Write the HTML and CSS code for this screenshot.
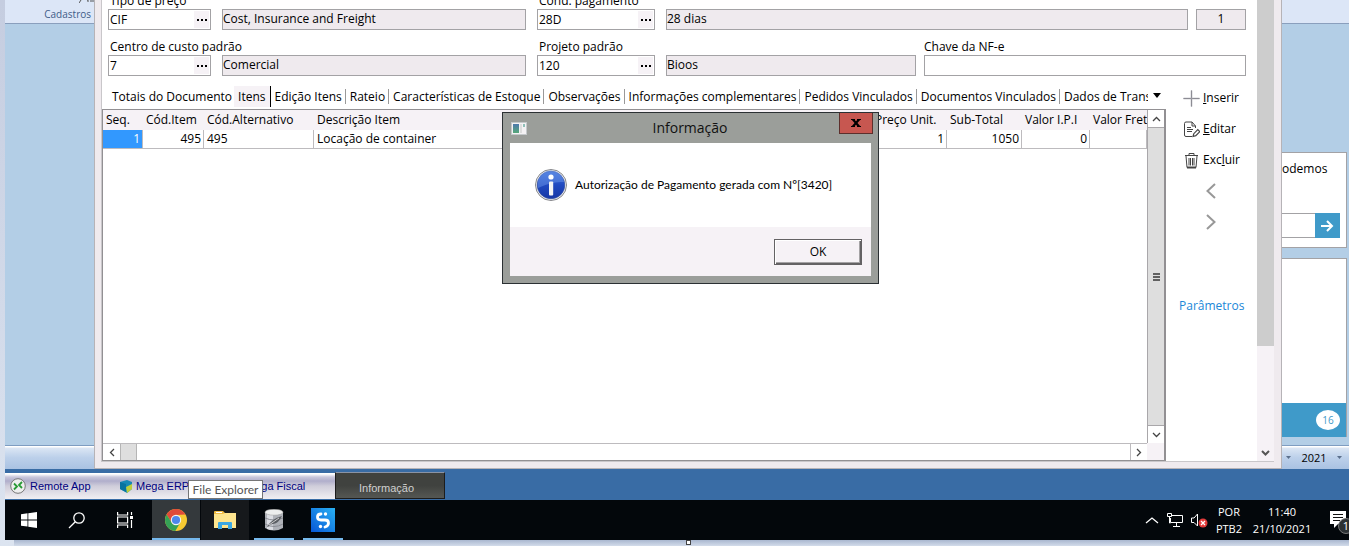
FILE: index.html
```html
<!DOCTYPE html>
<html lang="pt-BR">
<head>
<meta charset="utf-8">
<title>Mega ERP</title>
<link rel="stylesheet" href="styles.css">
</head>
<body>
<div class="screen">
  <main class="workspace">
    <aside class="side-left">
      <div class="ribbon"><svg class="ribbon-mark" width="15" height="3" viewBox="0 0 15 3"><path d="M2 0L0 3M8 0h1v2M12 0v2M14 0v2" stroke="#555" fill="none"/></svg><span>Cadastros</span></div>
      <div class="status"></div>
    </aside>

    <section class="window">
      <div class="window-body">
        <div class="content">
          <form class="form">
            <div class="form-row">
              <label class="lab" for="tipo">Tipo de preço</label>
              <span class="lab"></span>
              <label class="lab" for="cond">Cond. pagamento</label>
              <span class="lab"></span>
              <div class="picker"><input id="tipo" value="CIF"><button type="button" aria-label="Buscar tipo"><i></i><i></i><i></i></button></div>
              <input class="ro" aria-label="Descrição do tipo" value="Cost, Insurance and Freight" readonly>
              <div class="picker"><input id="cond" value="28D"><button type="button" aria-label="Buscar condição"><i></i><i></i><i></i></button></div>
              <div class="pair"><input class="ro grow" aria-label="Descrição da condição" value="28 dias" readonly><input class="ro count" aria-label="Parcelas" value="1" readonly></div>
            </div>
            <div class="form-row">
              <label class="lab" for="centro">Centro de custo padrão</label>
              <label class="lab" for="proj">Projeto padrão</label>
              <label class="lab lab-key" for="chave">Chave da NF-e</label>
              <div class="picker"><input id="centro" value="7"><button type="button" aria-label="Buscar centro"><i></i><i></i><i></i></button></div>
              <input class="ro" aria-label="Descrição do centro" value="Comercial" readonly>
              <div class="picker"><input id="proj" value="120"><button type="button" aria-label="Buscar projeto"><i></i><i></i><i></i></button></div>
              <div class="pair key-pair"><input class="ro" aria-label="Descrição do projeto" value="Bioos" readonly><input class="plain" id="chave"></div>
            </div>
          </form>

          <div class="lower">
            <div class="grid-area">
              <nav class="tabs">
                <div class="tab-list">
                  <button>Totais do Documento</button><button class="active">Itens</button><button>Edição Itens</button><button>Rateio</button><button>Características de Estoque</button><button>Observações</button><button>Informações complementares</button><button>Pedidos Vinculados</button><button>Documentos Vinculados</button><button>Dados de Transporte</button>
                </div>
                <button class="tab-more" aria-label="Mais abas"><svg width="8" height="5" viewBox="0 0 8 5"><path d="M0 0h8L4 5z"/></svg></button>
              </nav>
              <div class="grid">
                <div class="grid-view">
                  <table>
                    <colgroup><col class="c-seq"><col class="c-item"><col class="c-alt"><col><col class="c-price"><col class="c-sub"><col class="c-ipi"><col class="c-frete"></colgroup>
                    <thead><tr><th>Seq.</th><th>Cód.Item</th><th>Cód.Alternativo</th><th>Descrição Item</th><th>Preço Unit.</th><th>Sub-Total</th><th>Valor I.P.I</th><th>Valor Frete</th></tr></thead>
                    <tbody><tr><td class="num sel">1</td><td class="num">495</td><td>495</td><td>Locação de container</td><td class="num">1</td><td class="num">1050</td><td class="num">0</td><td></td></tr></tbody>
                  </table>
                </div>
                <div class="vbar">
                  <button aria-label="Subir"><svg width="9" height="6" viewBox="0 0 9 6"><path d="M1 5l3.500-3.500L8 5"/></svg></button>
                  <div class="vthumb"><i></i><i></i><i></i></div>
                  <button aria-label="Descer"><svg width="9" height="6" viewBox="0 0 9 6"><path d="M1 1l3.500 3.500L8 1"/></svg></button>
                </div>
                <div class="hbar">
                  <button aria-label="Esquerda"><svg width="6" height="9" viewBox="0 0 6 9"><path d="M5 1L1.500 4.500 5 8"/></svg></button>
                  <div class="hthumb"></div>
                  <button class="hright" aria-label="Direita"><svg width="6" height="9" viewBox="0 0 6 9"><path d="M1 1l3.500 3.500L1 8"/></svg></button>
                </div>
                <div class="corner"></div>
              </div>
            </div>
            <div class="actions">
              <button><svg width="17" height="17" viewBox="0 0 17 17"><path d="M8 .5h1v16H8zM.5 8h16v1H.5z" fill="#77757e" stroke="#aaa8b0" stroke-width=".5"/></svg><span><u>I</u>nserir</span></button>
              <button><svg width="17" height="17" viewBox="0 0 17 17" fill="none" stroke="#444"><path d="M12.500 7V5L9 1H3Q1.500 1 1.500 2.500v11.500q0 1.500 1.500 1.500h6M9 1v4h3.500M4 6.500h4M4 8.500h6M4 10.500h5"/><path d="M10 15.500l.8-2.800 4-4 2 2-4 4z" stroke-width="1.200"/></svg><span><u>E</u>ditar</span></button>
              <button><svg width="17" height="17" viewBox="0 0 17 17" fill="none" stroke="#444"><path d="M2 3.500h13M6 3V1.500h5V3M3 4l1 11.500h9L14 4M6 6v7.500M7.500 6v7.500M9.500 6v7.500M11 6v7.500"/><path d="M4 15.500h9" stroke-width="2"/></svg><span>Exc<u>l</u>uir</span></button>
              <button class="arrow" aria-label="Anterior"><svg width="10" height="16" viewBox="0 0 10 16"><path d="M9 1L1.500 8 9 15"/></svg></button>
              <button class="arrow" aria-label="Próximo"><svg width="10" height="16" viewBox="0 0 10 16"><path d="M1 1l7.500 7L1 15"/></svg></button>
              <a class="params" href="#">Parâmetros</a>
            </div>
          </div>
        </div>
        <div class="page-scroll"><div class="page-thumb"></div><button aria-label="Rolar para baixo"><svg width="9" height="6" viewBox="0 0 9 6"><path d="M1 1l3.500 3.500L8 1"/></svg></button></div>
      </div>
    </section>

    <aside class="side-right">
      <div class="ribbon"></div>
      <div class="cards">
        <div class="card search-card"><p>odemos</p><div class="search"><input aria-label="Pesquisa"><button aria-label="Ir"><svg width="13" height="12" viewBox="0 0 13 12"><path d="M0 6h11M6 1l5 5-5 5" fill="none" stroke="#fff" stroke-width="2"/></svg></button></div></div>
        <div class="card notes"><div class="band"><span>16</span></div></div>
      </div>
      <div class="status"><svg width="5" height="3" viewBox="0 0 5 3"><path d="M0 0h5L2.500 3z"/></svg><span>2021</span><svg width="5" height="3" viewBox="0 0 5 3"><path d="M0 0h5L2.500 3z"/></svg></div>
    </aside>

    <div class="dialog" role="dialog" aria-labelledby="dlg-title">
      <header>
        <svg width="16" height="13" viewBox="0 0 16 13"><defs><linearGradient id="mini" x1="0" y1="0" x2="0" y2="1"><stop offset="0" stop-color="#4d79ad"/><stop offset="1" stop-color="#57a879"/></linearGradient></defs><rect x=".5" y=".5" width="15" height="12" fill="#f4f2f4" stroke="#c5c9cb"/><path d="M2 2h6v9H2z" fill="url(#mini)"/><path d="M9 2h2v9H9z" fill="#ddd"/><path d="M12 2h2v3h-2z" fill="#8fc0b8"/></svg>
        <h1 id="dlg-title">Informação</h1>
        <button class="close" aria-label="Fechar"><svg width="10" height="8" viewBox="0 0 10 8"><path d="M1.500 0L8.500 8M8.500 0L1.500 8" stroke="#000" stroke-width="2.200"/><path d="M0 .5h4M6 .5h4M0 7.500h4M6 7.500h4" stroke="#000"/></svg></button>
      </header>
      <div class="dialog-inner">
        <div class="message">
          <svg width="32" height="32" viewBox="0 0 32 32"><defs><linearGradient id="blue" x1="0" y1="0" x2="0" y2="1"><stop offset="0" stop-color="#4276de"/><stop offset=".5" stop-color="#2049c0"/><stop offset="1" stop-color="#1737a5"/></linearGradient></defs><circle cx="16" cy="16" r="15.500" fill="#f2f2f2" stroke="#85868a"/><circle cx="16" cy="16" r="13.800" fill="url(#blue)" stroke="#334f9f" stroke-width=".7"/><path d="M3 16a13 13 0 0 1 26-3Q17 12 3 19z" fill="#6a94e8" opacity=".5"/><circle cx="16" cy="8" r="2.600" fill="#fff"/><rect x="14" y="12.500" width="4.200" height="14" rx="1" fill="#f5f5f5"/></svg>
          <p>Autorização de Pagamento gerada com Nº[3420]</p>
        </div>
        <footer><button class="ok">OK</button></footer>
      </div>
    </div>
  </main>

  <nav class="apps">
    <div class="app-list">
      <button><svg width="16" height="16" viewBox="0 0 16 16"><circle cx="8" cy="8" r="7.300" fill="#eee" stroke="#777"/><path d="M4 5.500l3 3-3 3M12 4L9 7l3 3" fill="none" stroke="#299a35" stroke-width="1.800"/></svg>Remote App</button>
      <button><svg width="12" height="13" viewBox="0 0 12 13"><path d="M0 2l7-2 5 2v7l-5 4-7-4z" fill="#1788b5"/><path d="M0 2l6 2v8L0 9z" fill="#08739f"/><path d="M6 7l6-3v5l-5 4z" fill="#bfcf3b"/></svg>Mega ERP</button>
      <button><svg width="12" height="13" viewBox="0 0 12 13"><path d="M0 2l7-2 5 2v7l-5 4-7-4z" fill="#1788b5"/></svg>Mega Fiscal</button>
    </div>
    <button class="app-current">Informação</button>
    <div class="tooltip" role="tooltip">File Explorer</div>
  </nav>

  <footer class="taskbar">
    <button class="tb" aria-label="Iniciar"><svg width="16" height="16" viewBox="0 0 16 16" fill="#fff"><path d="M0 2.200l6.500-.9v6.200H0zM7.300 1.200L16 0v7.500H7.300zM0 8.400h6.500v6.200L0 13.700zM7.300 8.400H16V16l-8.700-1.200z"/></svg></button>
    <button class="tb" aria-label="Pesquisar"><svg width="18" height="17" viewBox="0 0 18 17" fill="none" stroke="#fff" stroke-width="1.300"><circle cx="11" cy="6" r="5.200"/><path d="M7.300 9.800L1 16"/></svg></button>
    <button class="tb" aria-label="Visão de tarefas"><svg width="17" height="16" viewBox="0 0 17 16" fill="none" stroke="#fff" stroke-width="1.200"><path d="M.6 0v3h10V0M.6 5h10v6h-10zM.6 16v-3h10v3M14.500 0v3M14.500 8v8"/><path d="M13 4h3v3h-3z" fill="#fff" stroke="none"/></svg></button>
    <div class="running">
      <button class="tb chrome" aria-label="Chrome"><svg width="22" height="22" viewBox="0 0 22 22"><circle cx="11" cy="11" r="11" fill="#f7ca32"/><path d="M1.500 5.500A11 11 0 0 1 20.500 5.500L11 6 6.500 13.500z" fill="#df4a3a"/><path d="M1.500 5.500A11 11 0 0 0 10.300 22L15.300 13.500 6.700 13.500z" fill="#35a156"/><circle cx="11" cy="11" r="5.200" fill="#f4f4f4"/><circle cx="11" cy="11" r="4.100" fill="#4d87ec"/></svg></button>
      <button class="tb explorer" aria-label="File Explorer"><svg width="22" height="19" viewBox="0 0 22 19"><path d="M0 1q0-1 1-1h8l2 2h10q1 0 1 1v14H0z" fill="#f0bd45"/><path d="M2 1h6v1H2z" fill="#fff"/><path d="M0 3h9l2-1h11v15H0z" fill="#fde58f"/><path d="M4 18v-6q0-1 1-1h12q1 0 1 1v6h-4v-4H8v4z" fill="#3aa7e4"/></svg></button>
      <button class="tb run" aria-label="Banco de dados"><svg width="20" height="22" viewBox="0 0 20 22"><path d="M1 3v16q9 5 18 0V3z" fill="#aeb1b8"/><path d="M3 4v16q3 1 6 1V4z" fill="#dadce2"/><ellipse cx="10" cy="3.200" rx="9" ry="3" fill="#eceded" stroke="#999" stroke-width=".5"/><path d="M1 9q9 4 18 0M1 15q9 5 18 0" fill="none" stroke="#8a8c94"/><path d="M3 18Q7 10 18 7q-3 7-9 8-3 0-5 3z" fill="#5b5e64"/><path d="M5 16l10-7" stroke="#ccc"/></svg></button>
      <button class="tb run" aria-label="Aplicativo"><svg width="24" height="24" viewBox="0 0 24 24"><defs><linearGradient id="sb" x1="0" y1="1" x2="1" y2="0"><stop offset="0" stop-color="#0757d6"/><stop offset="1" stop-color="#29b1f4"/></linearGradient></defs><path d="M0 0h24v24H0z" fill="url(#sb)"/><path d="M10 6q-3.500 0-3.500 3T10 12h4q3.500 0 3.500 3T14 19" fill="none" stroke="#fff" stroke-width="2.800" stroke-linecap="round"/><circle cx="14.500" cy="6" r="1.700" fill="#fff"/><circle cx="9.500" cy="18.500" r="1.700" fill="#fff"/></svg></button>
    </div>
    <div class="tray">
      <svg width="14" height="8" viewBox="0 0 14 8"><path d="M1 7l6-5 6 5" fill="none" stroke="#fff" stroke-width="1.300"/></svg>
      <svg width="16" height="14" viewBox="0 0 16 14" fill="none" stroke="#fff"><path d="M5 2.500h10.500v7H3.500V5M.5.5h4v3h-4zM2.500 4v6h1M9.500 10v3M6 13.500h7"/></svg>
      <svg width="17" height="15" viewBox="0 0 17 15"><path d="M.5 5h2.500l3.500-4v12L3 9.500H.5z" fill="none" stroke="#fff"/><circle cx="12" cy="10" r="4.500" fill="#e23b3b"/><path d="M10 8l4 4M14 8l-4 4" stroke="#fff" stroke-width="1.300"/></svg>
      <div class="tray-text">POR<br>PTB2</div>
      <div class="tray-text clock">11:40<br>21/10/2021</div>
      <div class="notif"><svg width="17" height="18" viewBox="0 0 17 18"><path d="M0 0h16v13H8l-4 4v-4H0z" fill="#fff"/><path d="M3 3.500h10M3 6.500h10M3 9.500h7" stroke="#111"/></svg><span>1</span></div>
    </div>
  </footer>
  <div class="edge"><i></i></div>
</div>
</body>
</html>
```
FILE: styles.css
```css
* { box-sizing: border-box; }
html, body { height: 100%; }
body { margin: 0; overflow: hidden; font: 12px/16px "Open Sans", "Noto Sans", sans-serif; color: #000; }
button, input { font: inherit; color: inherit; margin: 0; padding: 0; border: 0; background: none; border-radius: 0; outline: 0; }
svg { flex: none; }
button { display: flex; align-items: center; }
h1, p { margin: 0; font-weight: 400; }

.screen { display: flex; flex-direction: column; height: 100vh; padding-left: 5px; background: linear-gradient(#c5cde0, #dce4f0); }
.workspace { position: relative; flex: 1; min-height: 0; display: flex; background: #b3cee6; }

.side-left, .side-right { flex: none; display: flex; flex-direction: column; overflow: hidden; }
.side-left { width: 89px; justify-content: space-between; }
.side-right { width: 67px; }
.ribbon { position: relative; flex: none; height: 24px; background: #dce6f7; border-bottom: 1px solid #8a9fbd; font-size: 10px; line-height: 16px; color: #3e5c87; padding: 6px 3px 0 0; text-align: right; }
.ribbon-mark { position: absolute; top: 0; right: 0; }
.status { flex: none; height: 24px; display: flex; align-items: center; justify-content: space-between; padding: 0 7px 0 4px; border-top: 1px solid #7f9dc1; background: linear-gradient(#fff 1px, #dbe6f4 2px, #bcd0ea 50%, #aac2e2); font-size: 11px; fill: #5b6f8c; }

.window { flex: 1; min-width: 0; display: flex; padding: 0 7px 6px 6px; background: #efeaee; border: solid #b6b3b7; border-width: 0 1px 1px; overflow: hidden; }
.window-body { flex: 1; min-width: 0; display: flex; background: #fff; border: solid #c9c7ca; border-width: 0 0 1px 1px; }
.content { flex: 1; min-width: 0; display: flex; flex-direction: column; }

.form { display: flex; flex-direction: column; gap: 8px; padding: 0 11px 0 6px; margin-top: -8px; }
.form-row { display: grid; grid-template-columns: 103px minmax(0, 304fr) 118px minmax(0, 580fr); column-gap: 11px; }
.lab { height: 17px; padding-left: 2px; line-height: 17px; white-space: nowrap; }
.form-row label[for="centro"] { grid-column: 1 / 3; }
.lab-key { margin-left: 258px; padding-left: 0; }
.form input { height: 21px; min-width: 0; width: 100%; }
.picker { display: flex; height: 21px; border: 1px solid #a3a2a5; }
.form .picker input { height: 19px; padding-left: 1px; }
.picker button { flex: none; width: 15px; margin: 1px; gap: 2px; justify-content: center; background: #f6f2f6; }
.picker i { width: 2px; height: 2px; background: #000; }
.form .ro { background: #efeaee; border: 1px solid #a3a2a5; padding: 0 0 3px; }
.form .plain { border: 1px solid #a3a2a5; }
.pair { display: flex; gap: 8px; }
.form .count { flex: none; width: 50px; text-align: center; }
.key-pair .ro { flex: none; width: 250px; }
.key-pair .plain { flex: 1; }

.lower { flex: 1; min-height: 0; display: flex; padding-top: 10px; }
.grid-area { flex: 1; min-width: 0; display: flex; flex-direction: column; }
.tabs { display: flex; height: 23px; align-items: flex-start; padding-left: 6px; }
.tab-list { flex: 1; min-width: 0; display: flex; overflow: hidden; }
.tab-list button { flex: none; height: 21px; padding: 0 4px; white-space: nowrap; background: linear-gradient(#999, #999) right 3px / 1px 15px no-repeat; }
.tab-list button:first-child { background: none; padding-right: 2px; }
.tab-list .active { background: #f6f2f6; border-right: 1px solid #000; }
.tab-more { flex: none; height: 18px; width: 18px; justify-content: center; }
.grid { flex: 1; min-height: 0; display: grid; grid-template: minmax(0, 1fr) 17px / minmax(0, 1fr) 17px; border: solid #929093; border-width: 1px 2px 1px 1px; }
.grid-view { overflow: hidden; }
table { width: 100%; table-layout: fixed; border-collapse: separate; border-spacing: 0; }
th { height: 20px; padding: 0 3px; text-align: left; font-weight: 400; background: #f6f2f6; white-space: nowrap; overflow: hidden; }
td { height: 19px; padding: 0 2px 0 3px; border: solid #bdbbbe; border-width: 0 1px 1px 0; white-space: nowrap; }
.num { text-align: right; }
.sel { color: #fff; background: #3298fe; }
.c-seq { width: 40px; } .c-item { width: 61px; } .c-alt { width: 110px; } .c-price { width: 75px; } .c-sub { width: 75px; } .c-ipi { width: 68px; } .c-frete { width: 57px; }
.vbar, .hbar { display: flex; fill: none; stroke: #444; stroke-width: 1.3; }
.vbar { flex-direction: column; border-left: 1px solid #a9a7aa; }
.vbar button { height: 17px; justify-content: center; background: #fff; }
.vthumb { flex: 1; display: flex; flex-direction: column; align-items: center; justify-content: center; gap: 1px; background: #dedede; border: solid #a9a7aa; border-width: 1px 0; }
.vthumb i { width: 7px; height: 2px; background: #606060; }
.hbar { border-top: 1px solid #bdbbbe; }
.hbar button { width: 17px; justify-content: center; }
.hthumb { width: 17px; background: #dedede; border: solid #b5b5b5; border-width: 0 1px; }
.hbar .hright { margin-left: auto; border-left: 1px solid #bdbbbe; }
.corner { background: #f6f2f6; }

.actions { flex: none; width: 91px; display: flex; flex-direction: column; padding-left: 17px; }
.actions button { height: 31px; gap: 3px; padding-bottom: 7px; }
.actions .arrow { width: 56px; justify-content: center; fill: none; stroke: #989898; stroke-width: 2; }
.params { margin: 57px 0 0 -4px; color: #2187d8; text-decoration: none; }
.page-scroll { flex: none; width: 17px; display: flex; flex-direction: column; justify-content: space-between; background: #f6f2f6; fill: none; stroke: #555; stroke-width: 2; }
.page-thumb { height: 75%; background: #cdcdcd; }
.page-scroll button { height: 17px; justify-content: center; }

.cards { flex: 1; display: flex; flex-direction: column; gap: 10px; padding: 128px 2px 8px 0; }
.card { background: #fff; border: solid #a3a2a5; border-width: 1px 1px 1px 0; }
.search-card { height: 96px; padding: 8px 6px 0 0; }
.search { display: flex; height: 25px; margin-top: 36px; }
.search input { flex: 1; min-width: 0; border: solid #a3a2a5; border-width: 1px 0; }
.search button { width: 25px; justify-content: center; background: #3f9ac9; }
.notes { flex: 1; display: flex; align-items: flex-end; border-bottom: 0; }
.band { width: 100%; height: 34px; display: flex; align-items: center; justify-content: flex-end; padding-right: 6px; background: #3f9ac9; }
.band span { width: 24px; height: 20px; border-radius: 50%; background: #fff; color: #3f9ac9; font-size: 10px; line-height: 20px; text-align: center; }

.dialog { position: absolute; left: 497px; top: 112px; width: 377px; padding: 0 7px 7px; background: #9b9e9a; border: 1px solid #2b3033; }
.dialog header { display: flex; height: 30px; align-items: center; justify-content: space-between; padding-left: 1px; }
.dialog h1 { flex: 1; padding-left: 14px; font-size: 14px; line-height: 20px; text-align: center; color: #111; }
.close { align-self: flex-start; width: 34px; height: 21px; margin-right: -2px; justify-content: center; background: #c75750; border: solid #5d2f2c; border-width: 0 1px 1px; }
.dialog-inner { background: #fff; }
.message { display: flex; align-items: center; gap: 8px; height: 84px; padding-left: 25px; white-space: nowrap; font-family: Lato, "Open Sans", sans-serif; }
.dialog-inner footer { display: flex; justify-content: flex-end; padding: 12px 9px 11px; background: #f6f2f6; }
.ok { width: 88px; height: 26px; justify-content: center; background: #f6f2f6; border: 1px solid #646264; box-shadow: inset 1px 1px #fff, inset -1px -1px #646264, inset -2px -2px #a5a3a5; }

.apps { position: relative; flex: none; display: flex; align-items: flex-end; height: 31px; padding-bottom: 1px; background: #396ca5; font: 11px/16px "Liberation Sans", sans-serif; }
.app-list { display: flex; width: 330px; height: 26px; background: linear-gradient(#fff 1px, #c9c7dc 4px, #b0aecb 8px, #cfcdda 50%, #f1eff2); color: #000080; }
.app-list button { gap: 4px; padding-left: 5px; width: 111px; white-space: nowrap; }
.app-current { width: 110px; height: 27px; padding: 4px 0 0 23px; background: linear-gradient(#40423f 50%, #555753); border: 1px solid #1c1c1c; border-top-color: #8a93a5; color: #d0d0d0; }
.tooltip { position: absolute; left: 183px; top: 11px; width: 75px; height: 19px; text-align: center; background: #fff; border: 1px solid #767676; color: #555; font: 12px/17px Lato, "Open Sans", sans-serif; white-space: nowrap; }

.taskbar { flex: none; display: flex; height: 40px; background: #03070b; color: #fff; overflow: hidden; }
.tb { width: 48px; height: 40px; justify-content: center; }
.running { display: flex; gap: 1px; margin-left: 3px; }
.chrome { background: linear-gradient(#76b9ed, #76b9ed) bottom / 100% 2px no-repeat #34393c; }
.explorer { background: #16191c; }
.run { background: linear-gradient(#76b9ed, #76b9ed) center bottom / 40px 2px no-repeat; }
.tray { display: flex; align-items: center; gap: 8px; margin-left: auto; }
.tray-text { font-size: 11px; line-height: 17px; text-align: center; }
.clock { width: 64px; white-space: nowrap; }
.notif { position: relative; width: 19px; height: 18px; margin-left: 8px; }
.notif span { position: absolute; left: 8px; top: 7px; width: 16px; height: 16px; border-radius: 50%; border: 1px solid #777; background: #2b3033; font-size: 11px; line-height: 14px; text-align: center; }
.edge { flex: none; height: 6px; margin-left: 9px; background: linear-gradient(#a9b7cf, #d3dcea); display: flex; justify-content: center; }
.edge i { width: 5px; height: 5px; margin-left: 14px; background: #fff; border: 1px solid #444; }
```
